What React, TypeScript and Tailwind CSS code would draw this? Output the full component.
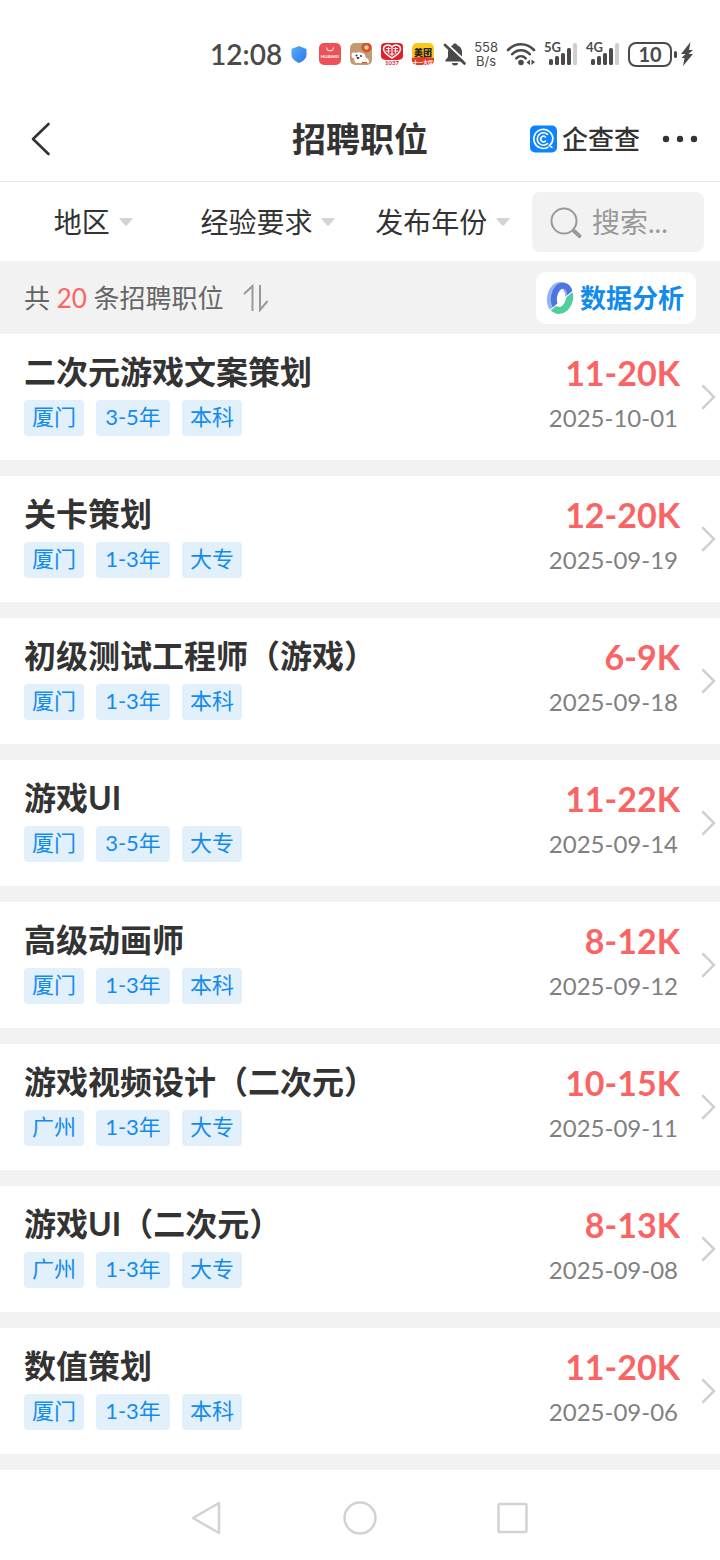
import React, { useState } from 'react'

const jobs = [
  { id: 1, title: '二次元游戏文案策划', city: '厦门', exp: '3-5年', edu: '本科', salary: '11-20K', date: '2025-10-01' },
  { id: 2, title: '关卡策划', city: '厦门', exp: '1-3年', edu: '大专', salary: '12-20K', date: '2025-09-19' },
  { id: 3, title: '初级测试工程师（游戏）', city: '厦门', exp: '1-3年', edu: '本科', salary: '6-9K', date: '2025-09-18' },
  { id: 4, title: '游戏UI', city: '厦门', exp: '3-5年', edu: '大专', salary: '11-22K', date: '2025-09-14' },
  { id: 5, title: '高级动画师', city: '厦门', exp: '1-3年', edu: '本科', salary: '8-12K', date: '2025-09-12' },
  { id: 6, title: '游戏视频设计（二次元）', city: '广州', exp: '1-3年', edu: '大专', salary: '10-15K', date: '2025-09-11' },
  { id: 7, title: '游戏UI（二次元）', city: '广州', exp: '1-3年', edu: '大专', salary: '8-13K', date: '2025-09-08' },
  { id: 8, title: '数值策划', city: '厦门', exp: '1-3年', edu: '本科', salary: '11-20K', date: '2025-09-06' },
]

const filters = ['地区', '经验要求', '发布年份']

function Signal({ label }: { label: string }) {
  return (
    <svg width="34" height="34" viewBox="0 -4 34 34" fill="#4a4a4a">
      <text x="0" y="11" fontSize="13" fontWeight="700">{label}</text>
      <rect x="5" y="18" width="4" height="6" rx="1.5" />
      <rect x="11" y="15" width="4" height="9" rx="1.5" />
      <rect x="17" y="12" width="4" height="12" rx="1.5" />
      <rect x="23" y="7" width="4" height="17" rx="1.5" />
      <rect x="29" y="2" width="4" height="22" rx="1.5" fill="#cfcfcf" />
    </svg>
  )
}

function AppIcons() {
  return (
    <div className="flex items-center gap-[9px]">
      <svg width="18" height="22" viewBox="0 0 18 22" className="mr-0.5">
        <defs>
          <linearGradient id="shield" x1="0" y1="0" x2="1" y2="1">
            <stop offset="0" stopColor="#55aef8" />
            <stop offset="1" stopColor="#2f74ee" />
          </linearGradient>
        </defs>
        <path d="M9 3 16.500 6v5.500c0 4-3 6.800-7.500 8.500-4.500-1.700-7.500-4.500-7.500-8.500V6z" fill="url(#shield)" />
      </svg>
      <svg width="22" height="22" viewBox="0 0 22 22">
        <rect width="22" height="22" rx="5" fill="#ee5158" />
        <path d="M7.500 4.500a3.500 3.500 0 0 0 7 0" fill="none" stroke="#fff" strokeWidth="1" />
        <text x="11" y="14.500" fontSize="4.500" fontWeight="700" fill="#fff" textAnchor="middle">HUAWEI</text>
      </svg>
      <svg width="22" height="22" viewBox="0 0 22 22">
        <rect width="22" height="22" rx="5" fill="#c29b72" />
        <path d="M1.500 12c0-2.500 2.500-3 4-2 3-1.500 8-1 9.500 2l1 3c2 0 3.500 2 3 5H6c-1.500-1.500-2-3-1.500-4.500-2 0-3-1.500-3-3.500z" fill="#fff" />
        <circle cx="16.500" cy="4.500" r="5" fill="#d8502e" />
        <circle cx="16.500" cy="4.500" r="2.200" fill="#f4d09a" />
        <circle cx="6.500" cy="12.500" r="1" fill="#333" />
        <circle cx="11" cy="13" r="1" fill="#333" />
        <ellipse cx="8" cy="15" rx="1.500" ry="1" fill="#333" />
        <path d="M12 19.500h5" stroke="#d8502e" strokeWidth="1.200" />
      </svg>
      <svg width="22" height="22" viewBox="0 0 22 22">
        <path d="M4 0h14a4 4 0 0 1 4 4v9c0 3-3 4-6 4H6c-3 0-6-1-6-4V4a4 4 0 0 1 4-4z" fill="#e0202c" />
        <path d="M11 15C6 12 2.500 9 2.500 6c0-4 5.500-5.500 8.500-2 3-3.500 8.500-2 8.500 2 0 3-3.500 6-8.500 9z" fill="none" stroke="#fff" strokeWidth="1.500" />
        <path d="M5 5.500h4.500M5 8h4.500M7.500 4v6.500M12.500 5.500H17M12.500 8H17M14.500 4v6.500M11 5v8M8.500 11h5" stroke="#fff" strokeWidth="1.100" />
        <text x="11" y="22" fontSize="6" fontWeight="700" fill="#e0202c" textAnchor="middle">1037</text>
      </svg>
      <svg width="22" height="22" viewBox="0 0 22 22">
        <rect width="22" height="22" rx="5" fill="#fcc81f" />
        <path d="M0 15q11-2 22 0v2a5 5 0 0 1-5 5H5a5 5 0 0 1-5-5z" fill="#e33a25" />
        <text x="11" y="12.500" fontSize="9" fontWeight="900" fill="#222" textAnchor="middle">美团</text>
        <text x="11" y="20.500" fontSize="5" fontWeight="700" fill="#fff" textAnchor="middle">十一大促</text>
      </svg>
    </div>
  )
}

function StatusBar() {
  return (
    <div className="flex h-24 items-center justify-end gap-2 pt-3 pr-[26px] text-[#4a4a4a]">
      <span className="text-[28px] leading-8 font-semibold">12:08</span>
      <AppIcons />
      <svg width="24" height="26" viewBox="0 0 24 26" fill="#4a4a4a">
        <path d="M13 2.500c1.200 0 2 .7 2.200 1.700 3 1 4.800 3.400 4.800 6.800v5l2.500 3v1.500H3.500V19L6 16v-5c0-3.400 1.800-5.800 4.800-6.800.2-1 1-1.700 2.200-1.700zM10 22h6a3 2.500 0 0 1-6 0z" />
        <path d="M4.500 2.500 24.500 21" stroke="#fff" strokeWidth="2" />
        <path d="M3 4 22.500 22.500" stroke="#4a4a4a" strokeWidth="2.600" strokeLinecap="round" />
      </svg>
      <span className="flex flex-col items-center font-[Inter,sans-serif] text-[13px] leading-[14px]">
        <span>558</span>
        <span>B/s</span>
      </span>
      <svg width="30" height="26" viewBox="0 0 30 26" fill="none" stroke="#4a4a4a" strokeWidth="2.600" strokeLinecap="round">
        <path d="M2 9C9.500 1.300 20.500 1.300 28 9" />
        <path d="M6.200 13.200c5-5.200 12.600-5.200 17.600 0" />
        <path d="M10.300 17.300c2.700-2.700 6.700-2.700 9.400 0" />
        <circle cx="15" cy="21.500" r="2.800" fill="#4a4a4a" stroke="none" />
        <path d="M24 18.500V24l-3.500-2.500zM25.500 24v-5.500l3.500 2.500z" fill="#4a4a4a" stroke="none" />
      </svg>
      <Signal label="5G" />
      <Signal label="4G" />
      <div className="flex items-center gap-[2px]">
        <span className="flex h-[25px] w-[44px] items-center justify-center rounded-lg border-2 border-[#4a4a4a] text-xl leading-5 font-bold">10</span>
        <span className="h-[7px] w-[3px] rounded-sm bg-[#4a4a4a]" />
        <svg width="15" height="26" viewBox="0 0 15 26" fill="#4a4a4a">
          <path d="M11.500 1 2 13h4.500L2.500 17h3L4 25l10-12H9.500L14 9h-4z" />
        </svg>
      </div>
    </div>
  )
}

function Header() {
  return (
    <header className="grid h-[86px] grid-cols-[1fr_auto_1fr] items-center border-b border-[#e8e8e8] px-5">
      <button type="button" aria-label="返回" className="w-10 pl-2">
        <svg width="24" height="36" viewBox="0 0 24 36" fill="none" stroke="#333" strokeWidth="2.600" strokeLinecap="round" strokeLinejoin="round">
          <path d="M20.500 3 5 18l15.500 15" />
        </svg>
      </button>
      <h1 className="text-[34px] leading-10 font-bold">招聘职位</h1>
      <div className="flex items-center justify-end gap-5">
        <div className="flex items-center gap-1">
          <svg width="28" height="28" viewBox="0 0 28 28" fill="none" stroke="#fff" strokeWidth="1.600" strokeLinecap="round">
            <rect x="0" y="0.500" width="27" height="27" rx="5" fill="#0d84ff" stroke="none" />
            <path d="M18 22.200A9.500 9.500 0 1 1 22.800 14c0 3-1.300 5-3.300 6.500l2.500 2" />
            <path d="M17.500 9.300a6.200 6.200 0 1 0 0 9.400" />
            <path d="M15.500 12a2.800 2.800 0 1 0 0 4" />
          </svg>
          <span className="text-[26px] leading-8 font-medium">企查查</span>
        </div>
        <button type="button" aria-label="更多">
          <svg width="40" height="8" viewBox="0 0 40 8" fill="#333">
            <circle cx="6" cy="4" r="3.200" />
            <circle cx="20" cy="4" r="3.200" />
            <circle cx="34" cy="4" r="3.200" />
          </svg>
        </button>
      </div>
    </header>
  )
}

function FilterBar() {
  const [keyword, setKeyword] = useState('')
  return (
    <div className="flex items-center pt-[10px] pr-4 pb-[9px] pl-[6px]">
      <div className="grid flex-1 grid-cols-3 pr-[2px]">
        {filters.map((name) => (
          <label key={name} className="flex items-center justify-center gap-2">
            <select aria-label={name} className="appearance-none bg-transparent text-[28px] leading-10">
              <option>{name}</option>
            </select>
            <svg width="14" height="8" viewBox="0 0 14 8" fill="#d4d4d4">
              <path d="M1 0h12q1 0 .5 1L8 7.300q-1 1-2 0L.5 1Q0 0 1 0z" />
            </svg>
          </label>
        ))}
      </div>
      <label className="flex h-[60px] w-[172px] items-center gap-2 rounded-lg bg-[#f2f2f2] pr-3 pl-4">
        <svg width="36" height="36" viewBox="0 0 36 36" fill="none" stroke="#999" className="shrink-0">
          <circle cx="16" cy="17" r="12.500" strokeWidth="2" />
          <path d="m26 27 5.500 5" strokeWidth="4" strokeLinecap="round" />
        </svg>
        <input
          aria-label="搜索"
          className="w-full min-w-0 bg-transparent text-[28px] leading-10 outline-none placeholder:text-[#999]"
          placeholder="搜索..."
          value={keyword}
          onChange={(e) => setKeyword(e.target.value)}
        />
      </label>
    </div>
  )
}

function Summary() {
  return (
    <div className="flex items-center justify-between bg-[#f2f2f2] px-6 pt-[11px] pb-[10px]">
      <div className="flex items-center gap-5 text-[26px] leading-10 text-[#666]">
        <p>共 <span className="text-[#f96464]">20</span> 条招聘职位</p>
        <button type="button" aria-label="排序">
          <svg width="26" height="28" viewBox="0 0 26 28" fill="none" stroke="#999" strokeWidth="2">
            <path d="M1 10 9.500 2v25M17 1v25l7.500-9" />
          </svg>
        </button>
      </div>
      <button type="button" className="flex h-[52px] items-center gap-[6px] rounded-[10px] bg-white pr-3 pl-[10px] text-[26px] leading-10 font-bold text-[#128bed]">
        <svg width="28" height="34" viewBox="0 0 28 34" fill="none">
          <defs>
            <clipPath id="ringTop">
              <path d="M0 0h28v8.500L3 29.500H0z" />
            </clipPath>
            <clipPath id="ringBottom">
              <path d="M28 10v24H4v-4z" />
            </clipPath>
          </defs>
          <g clipPath="url(#ringTop)">
            <ellipse cx="13" cy="17" rx="9" ry="13" strokeWidth="6" stroke="#94b2f8" transform="rotate(10 13 17)" />
            <ellipse cx="16" cy="16.500" rx="8" ry="12" strokeWidth="6" stroke="#4d75e0" transform="rotate(10 16 16.500)" />
          </g>
          <g clipPath="url(#ringBottom)">
            <ellipse cx="14" cy="17" rx="9.500" ry="12.500" strokeWidth="7" stroke="#50ce9b" transform="rotate(12 14 17)" />
          </g>
        </svg>
        数据分析
      </button>
    </div>
  )
}

function Tag({ text }: { text: string }) {
  return <span className="h-9 rounded-sm bg-[#e2f0fc] px-2 text-center text-[22px] leading-[34px] text-[#128bed]">{text}</span>
}

function JobRow({ job }: { job: typeof jobs[number] }) {
  return (
    <li>
      <a href={`#job-${job.id}`} className="flex items-center bg-white pr-1 pl-6">
        <div className="flex-1 pt-4 pb-6">
          <h2 className="text-[32px] leading-[44px] font-bold">{job.title}</h2>
          <div className="mt-[6px] grid auto-cols-max grid-cols-[auto_minmax(74px,auto)] grid-flow-col justify-start gap-3">
            <Tag text={job.city} />
            <Tag text={job.exp} />
            <Tag text={job.edu} />
          </div>
        </div>
        <div className="pt-4 pb-6 text-right">
          <p className="text-[34px] leading-[44px] font-bold text-[#f96464]">{job.salary}</p>
          <p className="mt-[6px] pr-[2px] text-2xl leading-[34px] text-[#808080]">{job.date}</p>
        </div>
        <svg width="16" height="28" viewBox="0 0 16 28" fill="none" stroke="#d0d0d0" strokeWidth="2.500" strokeLinecap="round" className="ml-5">
          <path d="m3 3 11 11L3 25" />
        </svg>
      </a>
    </li>
  )
}

function NavBar() {
  return (
    <nav className="flex h-[90px] items-center justify-center gap-[116px] bg-white pt-[6px]">
      <button type="button" aria-label="后退">
        <svg width="36" height="36" viewBox="0 0 36 36" fill="none" stroke="#d2d2d2" strokeWidth="2.500" strokeLinejoin="round">
          <path d="M3 18 29 3v30z" />
        </svg>
      </button>
      <button type="button" aria-label="主页">
        <svg width="36" height="36" viewBox="0 0 36 36" fill="none" stroke="#d2d2d2" strokeWidth="2.500">
          <circle cx="18" cy="18" r="15.500" />
        </svg>
      </button>
      <button type="button" aria-label="最近任务">
        <svg width="36" height="36" viewBox="0 0 36 36" fill="none" stroke="#d2d2d2" strokeWidth="2.500">
          <rect x="4.500" y="4" width="28" height="28" rx="1" />
        </svg>
      </button>
    </nav>
  )
}

export default function App() {
  return (
    <div className="min-h-screen bg-white font-[Lato,'Noto_Sans_CJK_SC',sans-serif] text-[#333]">
      <StatusBar />
      <Header />
      <FilterBar />
      <Summary />
      <ul className="flex flex-col gap-4 bg-[#f2f2f2] pb-4">
        {jobs.map((job) => (
          <JobRow key={job.id} job={job} />
        ))}
      </ul>
      <NavBar />
    </div>
  )
}
